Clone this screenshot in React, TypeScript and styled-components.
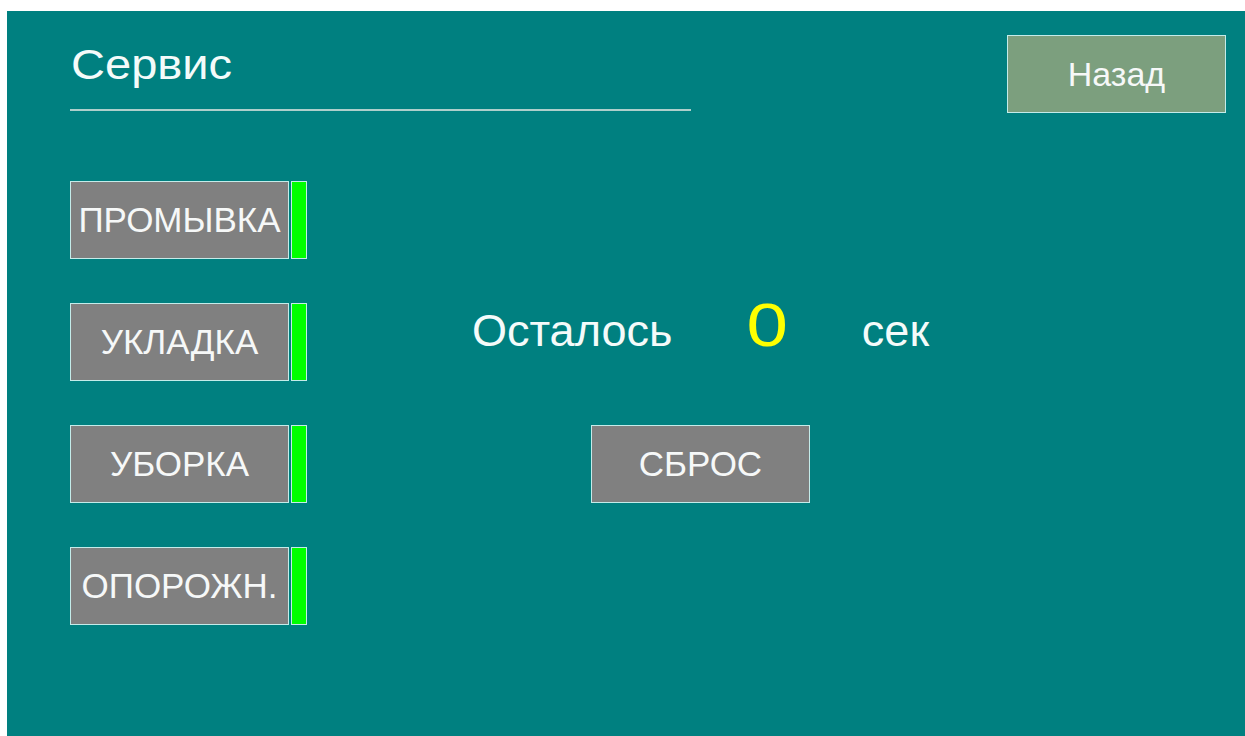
import React from "react";
import styled, { createGlobalStyle } from "styled-components";

const GlobalStyle = createGlobalStyle`
  html, body {
    margin: 0;
    padding: 0;
    background: #ffffff;
  }
  body {
    font-family: "Liberation Sans", Arial, sans-serif;
  }
`;

const Screen = styled.div`
  box-sizing: border-box;
  margin: 11px 0 0 7px;
  width: 1238px;
  height: 725px;
  background: #008080;
  padding: 24px 19px 0 63px;
  display: flex;
  flex-direction: column;
`;

const Header = styled.header`
  display: flex;
  justify-content: space-between;
  align-items: flex-start;
`;

const TitleBlock = styled.div`
  box-sizing: border-box;
  width: 621px;
  height: 76px;
  border-bottom: 2px solid #aecfcb;
  color: #f4fbfa;
  padding: 9px 0 0 1px;
`;

const TitleText = styled.span`
  display: inline-block;
  font-size: 42px;
  line-height: 1;
  transform: scaleX(1.12);
  transform-origin: left center;
`;

const PanelButton = styled.button<{ $tone?: "grey" | "sage" }>`
  box-sizing: border-box;
  width: 219px;
  height: 78px;
  margin: 0;
  padding: 0;
  border: 1px solid #c4ecea;
  background: ${(p) => (p.$tone === "sage" ? "#7c9f7e" : "#808080")};
  color: #f6f8f8;
  font-family: "Liberation Sans", Arial, sans-serif;
  font-size: ${(p) => (p.$tone === "sage" ? "34px" : "35px")};
  display: flex;
  align-items: center;
  justify-content: center;
  cursor: pointer;
`;

const Body = styled.div`
  margin-top: 68px;
  display: grid;
  grid-template-columns: 237px 1fr;
  grid-template-rows: repeat(4, 78px);
  row-gap: 44px;
`;

const ModeRow = styled.div`
  grid-column: 1;
  display: flex;
  gap: 2px;
`;

const Indicator = styled.div<{ $on: boolean }>`
  box-sizing: border-box;
  width: 16px;
  height: 78px;
  border: 1px solid #c4ecea;
  background: ${(p) => (p.$on ? "#00ff00" : "#406040")};
`;

const Counter = styled.div`
  grid-column: 2;
  grid-row: 2;
  align-self: start;
  margin-top: -9px;
  padding-left: 165px;
  display: flex;
  align-items: baseline;
  color: #f4fbfa;
  font-size: 45px;
  line-height: 1;
`;

const CounterValue = styled.span`
  display: inline-block;
  color: #ffff00;
  font-size: 62px;
  line-height: 1;
  transform: scaleX(1.2);
  margin: 0 77px 0 78px;
`;

const ResetSlot = styled.div`
  grid-column: 2;
  grid-row: 3;
  padding-left: 284px;
`;

const modes = ["ПРОМЫВКА", "УКЛАДКА", "УБОРКА", "ОПОРОЖН."];

export default function App() {
  return (
    <>
      <GlobalStyle />
      <Screen>
        <Header>
          <TitleBlock>
            <TitleText>Сервис</TitleText>
          </TitleBlock>
          <PanelButton $tone="sage">Назад</PanelButton>
        </Header>
        <Body>
          {modes.map((m, i) => (
            <ModeRow key={m} style={{ gridRow: i + 1 }}>
              <PanelButton>{m}</PanelButton>
              <Indicator $on />
            </ModeRow>
          ))}
          <Counter>
            <span>Осталось</span>
            <CounterValue>0</CounterValue>
            <span>сек</span>
          </Counter>
          <ResetSlot>
            <PanelButton>СБРОС</PanelButton>
          </ResetSlot>
        </Body>
      </Screen>
    </>
  );
}
